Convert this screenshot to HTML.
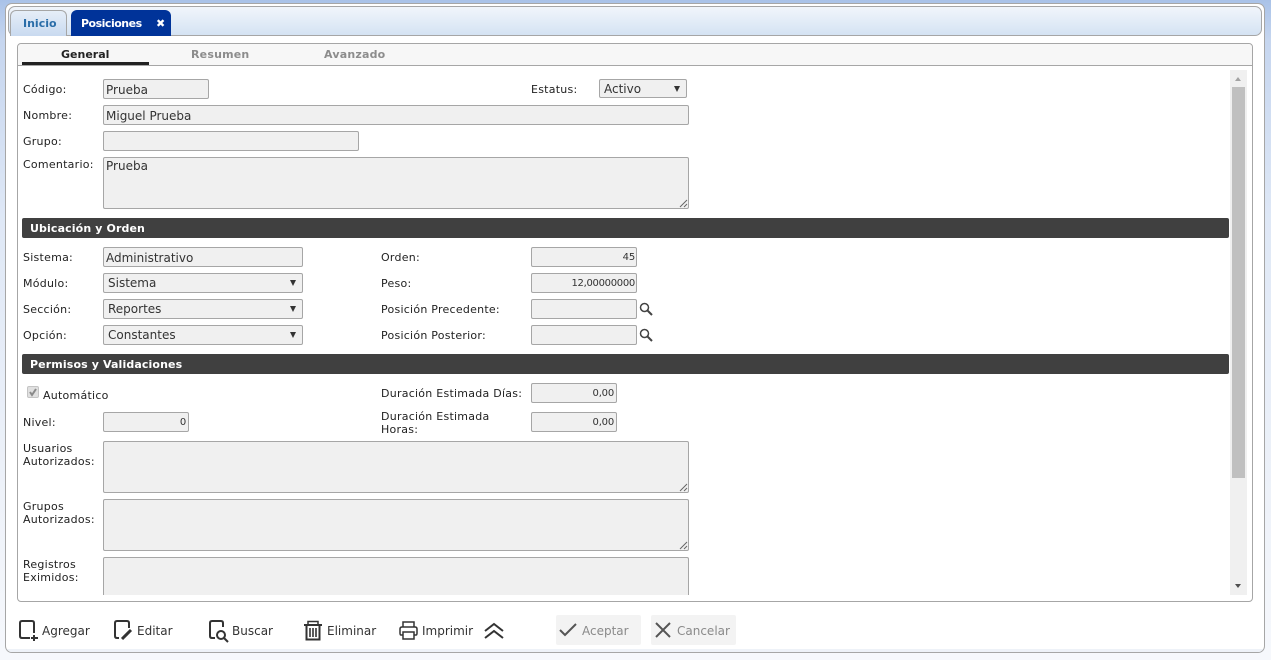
<!DOCTYPE html>
<html><head><meta charset="utf-8"><style>
html,body{margin:0;padding:0;width:1271px;height:660px;overflow:hidden;background:linear-gradient(#a9c2e8 0,#c6d6ef 40px,#dfe8f6 220px,#eef2f9 500px,#f6f8fc 660px);font-family:"DejaVu Sans","Liberation Sans",sans-serif;font-size:11px;color:#222}
div,span{position:absolute;box-sizing:border-box;white-space:nowrap}
.l{line-height:13px;letter-spacing:.25px}
.i{background:#f0f0f0;border:1px solid #a6a6a6;border-radius:2px;line-height:20px;padding-left:2px;font-size:12px;color:#333}
.r{text-align:right;padding:0 2px 0 0;font-size:10px;line-height:20px;letter-spacing:-.2px}
.s{padding-left:4px;line-height:18px}
.s:after{content:"";position:absolute;right:6px;top:6px;border-left:3.5px solid transparent;border-right:3.5px solid transparent;border-top:6px solid #333}
.h{left:22px;width:1207px;height:20px;background:#404040;color:#fff;font-weight:bold;line-height:21px;padding-left:8px;border-radius:2px;letter-spacing:.12px}
.b{font-size:12px;line-height:14px;color:#333}
svg{position:absolute;overflow:visible}
</style></head><body>
<div style="left:5px;top:3px;width:1260px;height:650px;background:#fff;border:1px solid #a6a6a6;border-radius:7px;overflow:hidden"><div style="left:0;bottom:0;width:100%;height:3px;background:#eef2f8"></div></div>
<div style="left:8px;top:6px;width:1254px;height:30px;background:linear-gradient(#f1f5fb,#d5e3f3);border:1px solid #a6a6a6;border-radius:7px"></div>
<div style="left:10px;top:10px;width:57px;height:26px;background:linear-gradient(#e6eef8,#c9daf0);border:1px solid #a6a6a6;border-bottom:0;border-radius:6px 6px 0 0;color:#2a6da8;font-weight:bold;line-height:25px;padding-left:12px">Inicio</div>
<div style="left:71px;top:10px;width:100px;height:26px;background:#003399;border-radius:6px 6px 0 0;color:#fff;font-weight:bold;line-height:27px;padding-left:10px;letter-spacing:-.5px">Posiciones<span style="left:85px;top:0;font-size:11px;line-height:27px;letter-spacing:0">✖</span></div>

<div style="left:17px;top:43px;width:1236px;height:559px;background:#fff;border:1px solid #a6a6a6;border-radius:4px"></div>
<div style="left:18px;top:44px;width:1234px;height:22px;background:#f7f7f7;border-bottom:1px solid #a6a6a6;border-radius:4px 4px 0 0"></div>
<div class="l" style="left:61px;top:48px;font-weight:bold;color:#222;letter-spacing:0">General</div>
<div style="left:22px;top:62px;width:127px;height:3px;background:#222"></div>
<div class="l" style="left:191px;top:48px;font-weight:bold;color:#8c8c8c;letter-spacing:.2px">Resumen</div>
<div class="l" style="left:324px;top:48px;font-weight:bold;color:#8c8c8c;letter-spacing:.2px">Avanzado</div>

<div style="left:1230px;top:70px;width:17px;height:525px;background:#f0f0f0"></div>
<div style="left:1232px;top:87px;width:13px;height:391px;background:#c0c0c0"></div>
<div style="left:1235px;top:77px;border-left:3.5px solid transparent;border-right:3.5px solid transparent;border-bottom:4px solid #a3a3a3"></div>
<div style="left:1235px;top:584px;border-left:3.5px solid transparent;border-right:3.5px solid transparent;border-top:4px solid #505050"></div>

<div class="l" style="left:23px;top:83px">Código:</div>
<div class="i" style="left:103px;top:79px;width:106px;height:20px">Prueba</div>
<div class="l" style="left:531px;top:83px">Estatus:</div>
<div class="i s" style="left:599px;top:79px;width:88px;height:19px;padding-left:4px;line-height:18px">Activo</div>
<div class="l" style="left:23px;top:109px">Nombre:</div>
<div class="i" style="left:103px;top:105px;width:586px;height:20px">Miguel Prueba</div>
<div class="l" style="left:23px;top:135px">Grupo:</div>
<div class="i" style="left:103px;top:131px;width:256px;height:20px"></div>
<div class="l" style="left:23px;top:158px">Comentario:</div>
<div class="i" style="left:103px;top:157px;width:586px;height:52px;line-height:16px">Prueba<svg style="right:0;bottom:0" width="9" height="9"><path d="M1 8L8 1M5 8L8 5" stroke="#666" fill="none"/></svg></div>

<div class="h" style="top:218px">Ubicación y Orden</div>
<div class="l" style="left:23px;top:251px">Sistema:</div>
<div class="i" style="left:103px;top:247px;width:200px;height:20px">Administrativo</div>
<div class="l" style="left:23px;top:277px">Módulo:</div>
<div class="i s" style="left:103px;top:273px;width:200px;height:20px">Sistema</div>
<div class="l" style="left:23px;top:303px">Sección:</div>
<div class="i s" style="left:103px;top:299px;width:200px;height:20px">Reportes</div>
<div class="l" style="left:23px;top:329px">Opción:</div>
<div class="i s" style="left:103px;top:325px;width:200px;height:20px">Constantes</div>

<div class="l" style="left:381px;top:251px">Orden:</div>
<div class="i r" style="left:531px;top:247px;width:106px;height:20px;padding-right:1px">45</div>
<div class="l" style="left:381px;top:277px">Peso:</div>
<div class="i r" style="left:531px;top:273px;width:106px;height:20px;padding-right:1px;letter-spacing:-.3px">12,00000000</div>
<div class="l" style="left:381px;top:303px">Posición Precedente:</div>
<div class="i" style="left:531px;top:299px;width:106px;height:20px"></div>
<svg style="left:639px;top:302px" width="14" height="14"><circle cx="5.5" cy="5.5" r="4" fill="none" stroke="#444" stroke-width="1.5"/><path d="M8.5 8.5L13 13" stroke="#444" stroke-width="2"/></svg>
<div class="l" style="left:381px;top:329px">Posición Posterior:</div>
<div class="i" style="left:531px;top:325px;width:106px;height:20px"></div>
<svg style="left:639px;top:328px" width="14" height="14"><circle cx="5.5" cy="5.5" r="4" fill="none" stroke="#444" stroke-width="1.5"/><path d="M8.5 8.5L13 13" stroke="#444" stroke-width="2"/></svg>

<div class="h" style="top:354px">Permisos y Validaciones</div>
<div style="left:27px;top:386px;width:12px;height:12px;background:#e0e0e0;border:1px solid #c4c4c4;border-radius:2px"></div>
<svg style="left:27px;top:386px" width="12" height="12"><path d="M3 6L5 9L9 3" stroke="#8a8a8a" stroke-width="2" fill="none"/></svg>
<div class="l" style="left:43px;top:389px">Automático</div>
<div class="l" style="left:23px;top:416px">Nivel:</div>
<div class="i r" style="left:103px;top:412px;width:86px;height:20px">0</div>
<div class="l" style="left:381px;top:387px">Duración Estimada Días:</div>
<div class="i r" style="left:531px;top:383px;width:86px;height:20px">0,00</div>
<div class="l" style="left:381px;top:410px">Duración Estimada<br>Horas:</div>
<div class="i r" style="left:531px;top:412px;width:86px;height:20px">0,00</div>
<div class="l" style="left:23px;top:442px">Usuarios<br>Autorizados:</div>
<div class="i" style="left:103px;top:441px;width:586px;height:52px"><svg style="right:0;bottom:0" width="9" height="9"><path d="M1 8L8 1M5 8L8 5" stroke="#666" fill="none"/></svg></div>
<div class="l" style="left:23px;top:500px">Grupos<br>Autorizados:</div>
<div class="i" style="left:103px;top:499px;width:586px;height:52px"><svg style="right:0;bottom:0" width="9" height="9"><path d="M1 8L8 1M5 8L8 5" stroke="#666" fill="none"/></svg></div>
<div class="l" style="left:23px;top:558px">Registros<br>Eximidos:</div>
<div class="i" style="left:103px;top:557px;width:586px;height:38px;border-bottom:0;border-radius:2px 2px 0 0"></div>

<svg style="left:18px;top:620px" width="22" height="22" fill="none" stroke="#333" stroke-width="2"><path d="M16 13V3Q16 1 14 1H4Q2 1 2 3V16Q2 18 4 18H12"/><path d="M16 15V21M13 18H20"/></svg>
<div class="b" style="left:42px;top:624px">Agregar</div>
<svg style="left:113px;top:620px" width="22" height="22" fill="none" stroke="#333" stroke-width="2"><path d="M16 8V3Q16 1 14 1H4Q2 1 2 3V16Q2 18 4 18H6"/><path d="M9 19L18 10" stroke-width="3"/></svg>
<div class="b" style="left:137px;top:624px">Editar</div>
<svg style="left:208px;top:620px" width="22" height="22" fill="none" stroke="#333" stroke-width="2"><path d="M15 7V3Q15 1 13 1H4Q2 1 2 3V16Q2 18 4 18H7"/><circle cx="13" cy="15" r="4"/><path d="M16 18L20 22"/></svg>
<div class="b" style="left:232px;top:624px">Buscar</div>
<svg style="left:304px;top:620px" width="19" height="21" fill="none" stroke="#333" stroke-width="1.5"><path d="M0 5H18" stroke-width="2"/><path d="M4 4V1.5H14V4"/><path d="M2.5 5V19.5H15.5V5" stroke-width="2"/><path d="M6 8V17M9 8V17M12 8V17" stroke-width="1.6"/></svg>
<div class="b" style="left:327px;top:624px">Eliminar</div>
<svg style="left:399px;top:620px" width="20" height="20" fill="none" stroke="#333" stroke-width="1.5"><path d="M4 7V2H15V7"/><path d="M4 15H2Q1 15 1 13V9Q1 7 3 7H16Q18 7 18 9V13Q18 15 17 15H15"/><path d="M4 12H15V19H4Z"/></svg>
<div class="b" style="left:422px;top:624px">Imprimir</div>
<svg style="left:484px;top:622px" width="20" height="17" fill="none" stroke="#333" stroke-width="2"><path d="M1 9L10 2L19 9M1 16L10 9L19 16"/></svg>

<div style="left:556px;top:615px;width:85px;height:30px;background:#f3f3f3;border-radius:2px"></div>
<svg style="left:559px;top:622px" width="18" height="15" fill="none" stroke="#555" stroke-width="2"><path d="M1 8L6 13L17 2"/></svg>
<div class="b" style="left:582px;top:624px;color:#8a8a8a">Aceptar</div>
<div style="left:651px;top:615px;width:85px;height:30px;background:#f3f3f3;border-radius:2px"></div>
<svg style="left:655px;top:622px" width="16" height="16" fill="none" stroke="#555" stroke-width="2"><path d="M1 1L15 15M15 1L1 15"/></svg>
<div class="b" style="left:677px;top:624px;color:#8a8a8a">Cancelar</div>
</body></html>
